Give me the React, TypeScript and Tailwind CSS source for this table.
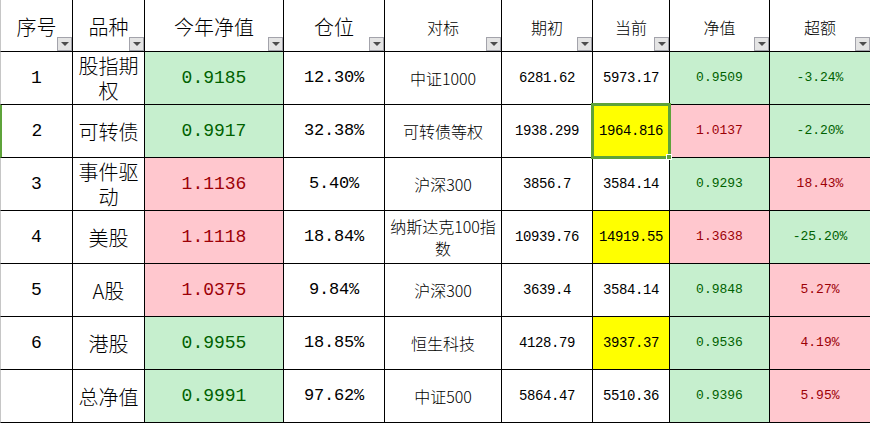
type Tone = "g" | "r";

type Row = {
  no: string;
  name: string;
  ytd: string;
  ytdTone: Tone;
  pos: string;
  bench: string;
  start: string;
  cur: string;
  curHi?: boolean;
  selected?: boolean;
  nav: string;
  navTone: Tone;
  ex: string;
  exTone: Tone;
};

const rows: Row[] = [
  { no: "1", name: "股指期权", ytd: "0.9185", ytdTone: "g", pos: "12.30%", bench: "中证1000", start: "6281.62", cur: "5973.17", nav: "0.9509", navTone: "g", ex: "-3.24%", exTone: "g" },
  { no: "2", name: "可转债", ytd: "0.9917", ytdTone: "g", pos: "32.38%", bench: "可转债等权", start: "1938.299", cur: "1964.816", curHi: true, selected: true, nav: "1.0137", navTone: "r", ex: "-2.20%", exTone: "g" },
  { no: "3", name: "事件驱动", ytd: "1.1136", ytdTone: "r", pos: "5.40%", bench: "沪深300", start: "3856.7", cur: "3584.14", nav: "0.9293", navTone: "g", ex: "18.43%", exTone: "r" },
  { no: "4", name: "美股", ytd: "1.1118", ytdTone: "r", pos: "18.84%", bench: "纳斯达克100指数", start: "10939.76", cur: "14919.55", curHi: true, nav: "1.3638", navTone: "r", ex: "-25.20%", exTone: "g" },
  { no: "5", name: "A股", ytd: "1.0375", ytdTone: "r", pos: "9.84%", bench: "沪深300", start: "3639.4", cur: "3584.14", nav: "0.9848", navTone: "g", ex: "5.27%", exTone: "r" },
  { no: "6", name: "港股", ytd: "0.9955", ytdTone: "g", pos: "18.85%", bench: "恒生科技", start: "4128.79", cur: "3937.37", curHi: true, nav: "0.9536", navTone: "g", ex: "4.19%", exTone: "r" },
  { no: "", name: "总净值", ytd: "0.9991", ytdTone: "g", pos: "97.62%", bench: "中证500", start: "5864.47", cur: "5510.36", nav: "0.9396", navTone: "g", ex: "5.95%", exTone: "r" },
];

const cjk = "font-['Noto_Sans_CJK_SC',sans-serif]";
const mono = "font-['Liberation_Mono',monospace]";
const cell = "relative flex items-center justify-center text-center border-b border-black";

const toneCls = (t: Tone) =>
  t === "g" ? "bg-[#c6efce] text-[#006100]" : "bg-[#ffc7ce] text-[#9c0006]";

function Filter() {
  return (
    <span className="absolute right-0 bottom-0 flex h-[14px] w-[15px] items-center justify-center border border-[#a3a3ab] bg-[#e4e4e4]">
      <span className="h-0 w-0 border-l-[4px] border-r-[4px] border-t-[4px] border-l-transparent border-r-transparent border-t-[#4d4d4d]" />
    </span>
  );
}

const headers = [
  { t: "序号", big: true },
  { t: "品种", big: true },
  { t: "今年净值", big: true },
  { t: "仓位", big: true },
  { t: "对标", big: false },
  { t: "期初", big: false },
  { t: "当前", big: false },
  { t: "净值", big: false },
  { t: "超额", big: false },
];

export default function App() {
  return (
    <div className="h-[423px] w-[870px] overflow-hidden bg-white text-black">
      <div className="grid grid-cols-[73px_72px_139px_101px_117px_91px_77px_100px_100px] grid-rows-[52px_repeat(7,53px)]">
        {headers.map((h, i) => (
          <div
            key={h.t}
            className={`${cell} ${cjk} font-light ${h.big ? "text-[20px]" : "text-[16px]"} ${i < 8 ? "border-r" : ""} ${i === 0 ? "border-l border-l-[#c6c6c6]" : ""}`}
          >
            <span className="pt-[2px]">{h.t}</span>
            <Filter />
          </div>
        ))}

        {rows.map((r, idx) => (
          <div key={idx} className="contents">
            <div
              className={`${cell} border-r ${mono} text-[18px] ${r.selected ? "border-l-2 border-l-[#5ea33a]" : "border-l border-l-[#c6c6c6]"}`}
            >
              {r.no}
            </div>
            <div className={`${cell} border-r ${cjk} font-light text-[20px] leading-[25px]`}>
              <span className="block w-[62px]">{r.name}</span>
            </div>
            <div className={`${cell} border-r ${mono} text-[18px] ${toneCls(r.ytdTone)}`}>
              {r.ytd}
            </div>
            <div className={`${cell} border-r ${mono} text-[17px] tracking-[-0.2px]`}>
              {r.pos}
            </div>
            <div className={`${cell} border-r ${cjk} font-light px-[1px] text-[16px] leading-[22px]`}>
              {r.bench}
            </div>
            <div className={`${cell} border-r ${mono} text-[14px] tracking-[-0.4px]`}>
              {r.start}
            </div>
            <div
              className={`${cell} border-r ${mono} text-[14px] tracking-[-0.4px] ${r.curHi ? "bg-[#ffff00]" : ""}`}
            >
              {r.cur}
              {r.selected && (
                <span className="absolute -top-[2px] -bottom-[2px] -left-[2px] -right-[2px] z-10 border-[3px] border-[#5ea33a]">
                  <span className="absolute -right-[4px] -bottom-[4px] h-[6px] w-[6px] border border-white bg-[#5ea33a]" />
                </span>
              )}
            </div>
            <div className={`${cell} border-r ${mono} text-[13px] ${toneCls(r.navTone)}`}>
              {r.nav}
            </div>
            <div className={`${cell} ${mono} text-[13px] ${toneCls(r.exTone)}`}>
              {r.ex}
            </div>
          </div>
        ))}
      </div>
    </div>
  );
}
